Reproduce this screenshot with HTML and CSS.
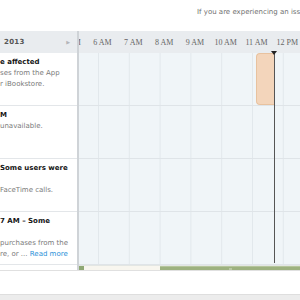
FILE: index.html
```html
<!DOCTYPE html>
<html lang="en">
<head>
    <meta charset="UTF-8">
    <title>System Status</title>
    <link rel="stylesheet" href="styles.css">
</head>
<body>
    <div class="notice">If you are experiencing an iss</div>

    <div class="board">
        <div class="side">
            <div class="side-head">
                <span class="day">2013</span>
                <span class="next">&#9654;</span>
            </div>
            <div class="entry">
                <div class="title">e affected</div>
                <div class="desc">ses from the App<br>r iBookstore.</div>
            </div>
            <div class="entry">
                <div class="title">M</div>
                <div class="desc">unavailable.</div>
            </div>
            <div class="entry">
                <div class="title two">Some users were</div>
                <div class="desc">FaceTime calls.</div>
            </div>
            <div class="entry">
                <div class="title two">7 AM &ndash; Some</div>
                <div class="desc">purchases from the<br>re, or ... <a href="#">Read more</a></div>
            </div>
        </div>

        <div class="timeline">
            <div class="time-head">
                <span class="hour">5 AM</span>
                <span class="hour">6 AM</span>
                <span class="hour">7 AM</span>
                <span class="hour">8 AM</span>
                <span class="hour">9 AM</span>
                <span class="hour">10 AM</span>
                <span class="hour">11 AM</span>
                <span class="hour">12 PM</span>
                <span class="hour">1 PM</span>
            </div>
            <div class="lanes">
                <div class="lane"></div>
                <div class="lane"></div>
                <div class="lane"></div>
                <div class="lane"></div>
            </div>
            <!-- incident block and current time marker sit on the time canvas -->
            <div class="event" style="left: 177px; width: 18px;"></div>
            <div class="now" style="left: 195px;"></div>
            <div class="scroll">
                <div class="scroll-btn"></div>
                <div class="scroll-track">
                    <div class="scroll-thumb"><span class="grip"></span></div>
                </div>
            </div>
        </div>
    </div>

    <div class="footer"></div>
</body>
</html>
```

FILE: styles.css
```css
* {
    margin: 0;
    padding: 0;
    box-sizing: border-box;
}
body {
    font-family: "DejaVu Sans", Verdana, sans-serif;
    background: #fff;
    width: 300px;
    height: 300px;
    overflow: hidden;
}
.notice {
    height: 31px;
    padding: 8px 0 0 197px;
    font-size: 7px;
    line-height: 9px;
    color: #6f6f6f;
    white-space: nowrap;
    overflow: hidden;
}

.board {
    display: flex;
    height: 240px;
    border-bottom: 1px solid #e0e0e0;
}
.side {
    width: 79px;
    border-right: 2px solid #cfd3d7;
    overflow: hidden;
    background: #fff;
}
.side-head {
    height: 22px;
    background: #e9ecef;
    display: flex;
    align-items: center;
    justify-content: space-between;
    padding: 0 7px 0 4px;
}
.day {
    font-size: 7px;
    font-weight: bold;
    color: #555;
    letter-spacing: 0.3px;
}
.next {
    font-size: 5px;
    color: #b3b6b9;
}
.entry {
    height: 53px;
    border-bottom: 1px solid #e3e6e9;
    padding-top: 4px;
    font-size: 7px;
    line-height: 11px;
    white-space: nowrap;
}
.title {
    font-weight: bold;
    color: #151515;
}
.title.two {
    margin-bottom: 11px;
}
.desc {
    color: #7a7a7a;
}
.desc a {
    color: #2a90d8;
    text-decoration: none;
}

.timeline {
    flex: 1;
    position: relative;
    overflow: hidden;
    background: #f0f5f8;
    display: flex;
    flex-direction: column;
}
.time-head {
    height: 22px;
    flex-shrink: 0;
    background: #e9ecef;
    display: flex;
    align-items: center;
    margin-left: -22.7px;
}
.hour {
    flex: 0 0 30.8px;
    text-align: center;
    white-space: nowrap;
    font-family: "Liberation Serif", "Times New Roman", serif;
    font-size: 8px;
    color: #666;
}
.lanes {
    flex: 1;
    background-image: linear-gradient(to right, #e2e8ec 1px, transparent 1px);
    background-size: 30.8px 100%;
    background-position: 19px 0;
}
.lane {
    height: 53px;
    border-bottom: 1px solid #dfe4e8;
}
.event {
    position: absolute;
    top: 22px;
    height: 52px;
    background: #f3d5bb;
    border: 1px solid #e8c29f;
    border-right: none;
    border-radius: 4px 0 0 4px;
}
.now {
    position: absolute;
    top: 20px;
    bottom: 7px;
    width: 1px;
    background: #555;
}
.now::before {
    content: "";
    position: absolute;
    top: 0;
    left: -3px;
    border-left: 3.5px solid transparent;
    border-right: 3.5px solid transparent;
    border-top: 4px solid #222;
}
.scroll {
    height: 7px;
    flex-shrink: 0;
    display: flex;
    border-top: 1px solid #e3e6e3;
}
.scroll-btn {
    width: 5px;
    background: #8fa874;
}
.scroll-track {
    flex: 1;
    background: #f8f6ef;
    padding-left: 76px;
}
.scroll-thumb {
    height: 100%;
    background: #9db17f;
    border-top: 1px solid #b5c59c;
    display: flex;
    align-items: center;
    justify-content: center;
}
.grip {
    width: 3px;
    height: 3px;
    background: #b9c8a2;
}

.footer {
    margin-top: 23px;
    height: 6px;
    background: #ececec;
    border-top: 1px solid #dedede;
}
```
